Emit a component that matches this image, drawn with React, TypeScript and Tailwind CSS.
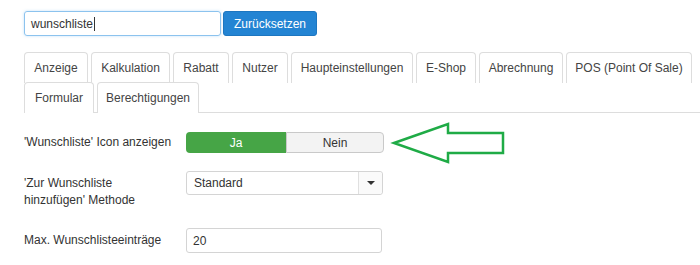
import React from 'react';

const rowOne = [
  { label: 'Anzeige', w: 'w-[64px]' },
  { label: 'Kalkulation', w: 'w-[79px]' },
  { label: 'Rabatt', w: 'w-[56px]' },
  { label: 'Nutzer', w: 'w-[56px]' },
  { label: 'Haupteinstellungen', w: 'w-[122px]' },
  { label: 'E-Shop', w: 'w-[60px]' },
  { label: 'Abrechnung', w: 'w-[84px]' },
  { label: 'POS (Point Of Sale)', w: 'w-[126px]' },
];

const rowTwo = [
  { label: 'Formular', w: 'w-[70px]' },
  { label: 'Berechtigungen', w: 'w-[102px]' },
];

function Tab({ label, w }: { label: string; w: string }) {
  return (
    <div
      className={`${w} relative h-[31px] -mb-px flex items-center justify-center bg-white border border-b-0 border-[#dddddd] rounded-t-[4px] text-[12px] text-[#444]`}
    >
      {label}
    </div>
  );
}

export default function App() {
  return (
    <div
      className="relative w-[700px] h-[265px] bg-white overflow-hidden text-[#333] text-[12px]"
      style={{ fontFamily: '"Liberation Sans", Arial, sans-serif' }}
    >
      <div className="px-[24px] pt-[11px]">
        {/* search */}
        <div className="flex items-center gap-[2px]">
          <div className="w-[197px] h-[25px] flex items-center px-[6px] border border-[#8cc3ee] rounded-[3px] shadow-[0_0_3px_rgba(82,168,236,0.35)]">
            <span>wunschliste</span>
            <span className="w-px h-[14px] bg-[#333] ml-px" />
          </div>
          <button className="w-[94px] h-[25px] bg-[#2384d3] text-white rounded-[3px] border border-[#1d76c0]">
            Zurücksetzen
          </button>
        </div>

        {/* tabs */}
        <div className="mt-[16px] w-[676px] flex flex-wrap gap-x-[3px] border-b border-[#dddddd]">
          {rowOne.map((t) => (
            <Tab key={t.label} {...t} />
          ))}
          {rowTwo.map((t) => (
            <Tab key={t.label} {...t} />
          ))}
        </div>

        {/* form */}
        <div className="mt-[19px] flex items-center">
          <div className="w-[162px] leading-[17px]">'Wunschliste' Icon anzeigen</div>
          <div className="flex h-[21px]">
            <div className="w-[100px] flex items-center justify-center bg-[#46a546] text-white rounded-l-[4px]">
              Ja
            </div>
            <div className="w-[98px] flex items-center justify-center bg-[#f3f3f3] border border-[#c9c9c9] rounded-r-[4px] text-[#333]">
              Nein
            </div>
          </div>
        </div>

        <div className="mt-[18px] flex items-start">
          <div className="w-[162px] pt-[4px] leading-[17px]">
            'Zur Wunschliste
            <br />
            hinzufügen' Methode
          </div>
          <div className="w-[197px] h-[24px] flex border border-[#d4d4d4] rounded-[3px] bg-white">
            <div className="flex-1 flex items-center px-[7px]">Standard</div>
            <div className="w-[24px] flex items-center justify-center border-l border-[#e0e0e0] bg-[#fafafa] rounded-r-[3px]">
              <div className="w-0 h-0 border-l-[4px] border-r-[4px] border-t-[4px] border-l-transparent border-r-transparent border-t-[#333]" />
            </div>
          </div>
        </div>

        <div className="mt-[19px] flex items-center">
          <div className="w-[162px] leading-[17px]">Max. Wunschlisteeinträge</div>
          <div className="w-[196px] h-[25px] flex items-center px-[6px] border border-[#d4d4d4] rounded-[3px]">
            20
          </div>
        </div>
      </div>

      {/* annotation arrow */}
      <svg className="absolute left-[390px] top-[120px]" width="120" height="46" viewBox="0 0 120 46">
        <polygon
          points="4,23 58,4 58,13 113,13 113,33 58,33 58,42"
          fill="none"
          stroke="#1fab46"
          strokeWidth="2.5"
          strokeLinejoin="miter"
        />
      </svg>
    </div>
  );
}
